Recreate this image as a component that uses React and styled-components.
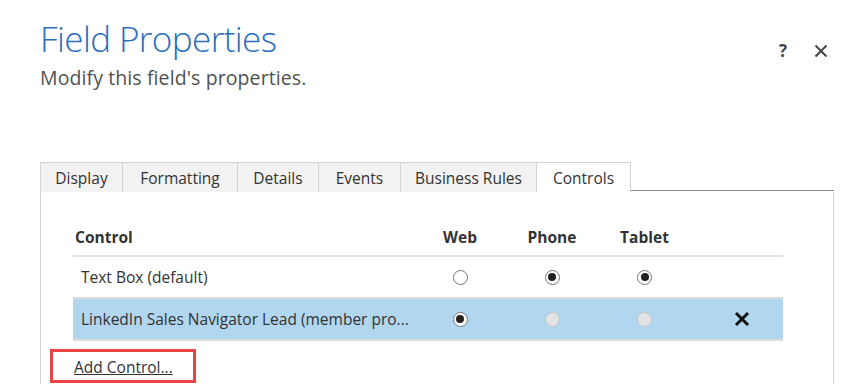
import React from 'react';
import styled, { createGlobalStyle } from 'styled-components';

const Global = createGlobalStyle`
    body {
        margin:0;
        background:#ffffff;
        font-family: 'Open Sans', 'Noto Sans', sans-serif;
        color:#333333;
    }
`

const Page = styled.div`
    width:859px;
    height:384px;
    overflow:hidden;
    padding:16px 0 0 40px;
    box-sizing:border-box;
`

const Header = styled.div`
    display:flex;
    justify-content:space-between;
    align-items:flex-start;
    width:788px;
`

const Title = styled.h1`
    margin:0;
    font-size:35px;
    font-weight:300;
    color:#2a6ebb;
    line-height:46px;
    letter-spacing:-0.6px;
`

const Subtitle = styled.div`
    font-size:19.5px;
    color:#505050;
    line-height:26px;
    margin-top:3px;
    letter-spacing:0.1px;
`

const HeadIcons = styled.div`
    display:flex;
    gap:27px;
    align-items:center;
    margin-top:23px;
    color:#444444;
    font-size:17px;
    font-weight:700;
`

const Tabs = styled.div`
    display:flex;
    margin-top:71px;
    height:30px;
`

const Tab = styled.div`
    width:${({w})=>w}px;
    box-sizing:border-box;
    display:flex;
    align-items:center;
    justify-content:center;
    font-size:15.5px;
    color:#333;
    background:${({active})=>active ? '#ffffff' : '#f2f2f2'};
    border-top:1px solid #d4d4d4;
    border-right:1px solid #d4d4d4;
    &:first-child { border-left:1px solid #d4d4d4; }
`

const TabFill = styled.div`
    width:203px;
    border-bottom:1px solid #8a8a8a;
    margin-bottom:1px;
`

const Panel = styled.div`
    width:794px;
    height:200px;
    box-sizing:border-box;
    border-left:1px solid #d4d4d4;
    border-right:1px solid #d4d4d4;
    padding:26px 0 0 32px;
`

const Grid = styled.div`
    display:grid;
    grid-template-columns:341px 92px 92px 93px 92px;
    width:710px;
`

const Row = styled.div`
    display:contents;
`

const Cell = styled.div`
    height:${({h})=>h}px;
    display:flex;
    align-items:center;
    justify-content:${({left})=>left ? 'flex-start' : 'center'};
    padding-left:${({pad})=>pad ? `${pad}px` : '0'};
    font-size:15.5px;
    color:#333;
    white-space:nowrap;
    font-weight:${({head})=>head ? 700 : 400};
    background:${({selected})=>selected ? '#b1d6f0' : 'transparent'};
    border-bottom:${({line})=>line ? `2px solid ${line}` : 'none'};
    box-sizing:border-box;
`

const Radio = styled.span`
    width:15px;
    height:15px;
    box-sizing:border-box;
    border-radius:50%;
    border:1.5px solid ${({disabled})=>disabled ? '#c4c4c4' : '#767676'};
    background:${({disabled})=>disabled ? '#e3e3e3' : '#ffffff'};
    display:flex;
    align-items:center;
    justify-content:center;
    &::after {
        content:'';
        display:${({checked})=>checked ? 'block' : 'none'};
        width:8px;
        height:8px;
        border-radius:50%;
        background:#222;
    }
`

const AddWrap = styled.div`
    margin:8px 0 0 -23px;
    width:146px;
    height:34px;
    box-sizing:border-box;
    border:3px solid #ea4444;
    display:flex;
    align-items:center;
    padding-left:21px;
`

const AddLink = styled.span`
    font-size:15.5px;
    color:#333;
    text-decoration:underline;
    margin-top:1px;
`

const Remove = () => (
    <svg width="16" height="16" viewBox="0 0 16 16">
        <path d="M2 2 L14 14 M14 2 L2 14" stroke="#111" strokeWidth="3" />
    </svg>
)

const tabs = [
    ['Display', 83], ['Formatting', 115], ['Details', 81], ['Events', 82], ['Business Rules', 136], ['Controls', 94]
]

const rows = [
    { name:'Text Box (default)', web:false, phone:true, tablet:true },
    { name:'LinkedIn Sales Navigator Lead (member pro...', web:true, phone:false, tablet:false, selected:true, disabled:true }
]

const App = ()=>{

    return <Page>
        <Global/>

        <Header>
            <div>
                <Title>Field Properties</Title>
                <Subtitle>Modify this field's properties.</Subtitle>
            </div>
            <HeadIcons>
                <span>?</span>
                <svg width="14" height="14" viewBox="0 0 14 14">
                    <path d="M1.5 1.5 L12.5 12.5 M12.5 1.5 L1.5 12.5" stroke="#444" strokeWidth="2" />
                </svg>
            </HeadIcons>
        </Header>

        <Tabs>
            {tabs.map(([t, w]) => <Tab key={t} w={w} active={t === 'Controls'}>{t}</Tab>)}
            <TabFill/>
        </Tabs>

        <Panel>
            <Grid>
                <Row>
                    <Cell h={39} left pad={2} head line="#e3e3e3">Control</Cell>
                    <Cell h={39} head line="#e3e3e3">Web</Cell>
                    <Cell h={39} head line="#e3e3e3">Phone</Cell>
                    <Cell h={39} head line="#e3e3e3">Tablet</Cell>
                    <Cell h={39} line="#e3e3e3"></Cell>
                </Row>
                {rows.map(r => (
                    <Row key={r.name}>
                        <Cell h={42} left pad={8} selected={r.selected} line="#dcdcdc">{r.name}</Cell>
                        <Cell h={42} selected={r.selected} line="#dcdcdc"><Radio checked={r.web}/></Cell>
                        <Cell h={42} selected={r.selected} line="#dcdcdc"><Radio checked={r.phone} disabled={r.disabled}/></Cell>
                        <Cell h={42} selected={r.selected} line="#dcdcdc"><Radio checked={r.tablet} disabled={r.disabled}/></Cell>
                        <Cell h={42} pad={9} selected={r.selected} line="#dcdcdc">{r.selected && <Remove/>}</Cell>
                    </Row>
                ))}
            </Grid>

            <AddWrap>
                <AddLink>Add Control...</AddLink>
            </AddWrap>
        </Panel>

    </Page>

}

export default App;
